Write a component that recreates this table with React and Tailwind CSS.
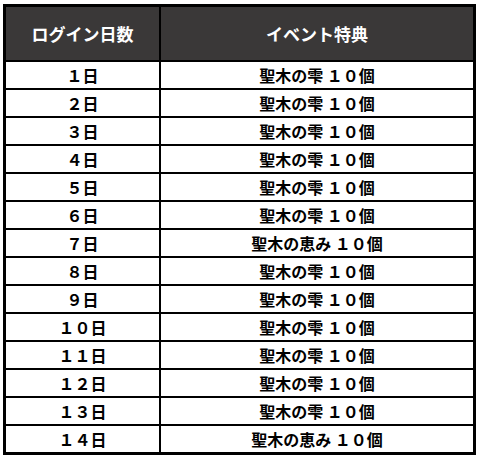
import React from 'react'

const rows = [
  ['１日', '聖木の雫 １０個'],
  ['２日', '聖木の雫 １０個'],
  ['３日', '聖木の雫 １０個'],
  ['４日', '聖木の雫 １０個'],
  ['５日', '聖木の雫 １０個'],
  ['６日', '聖木の雫 １０個'],
  ['７日', '聖木の恵み １０個'],
  ['８日', '聖木の雫 １０個'],
  ['９日', '聖木の雫 １０個'],
  ['１０日', '聖木の雫 １０個'],
  ['１１日', '聖木の雫 １０個'],
  ['１２日', '聖木の雫 １０個'],
  ['１３日', '聖木の雫 １０個'],
  ['１４日', '聖木の恵み １０個'],
]

const App = () => {
  return (
    <div className="bg-white w-[479px] h-[458px] pt-[4px] pl-[3px] font-['Noto_Sans_CJK_JP',sans-serif]">
      <div className="w-[473px] border-[3px] border-black">
        {/* header */}
        <div className="flex h-[55px] bg-[#3a3838] border-b-2 border-black text-white font-bold text-[17px]">
          <div className="w-[155px] flex items-center justify-center border-r-2 border-black">
            ログイン日数
          </div>
          <div className="flex-1 flex items-center justify-center">イベント特典</div>
        </div>
        {rows.map((r, i) => (
          <div
            key={i}
            className={
              'flex text-black font-bold text-[16px] leading-none ' +
              (i < rows.length - 1 ? 'h-[28px] border-b-2 border-black' : 'h-[26px]')
            }
          >
            <div className="w-[155px] flex items-center justify-center border-r-2 border-black">
              {r[0]}
            </div>
            <div className="flex-1 flex items-center justify-center whitespace-pre">{r[1]}</div>
          </div>
        ))}
      </div>
    </div>
  )
}

export default App
